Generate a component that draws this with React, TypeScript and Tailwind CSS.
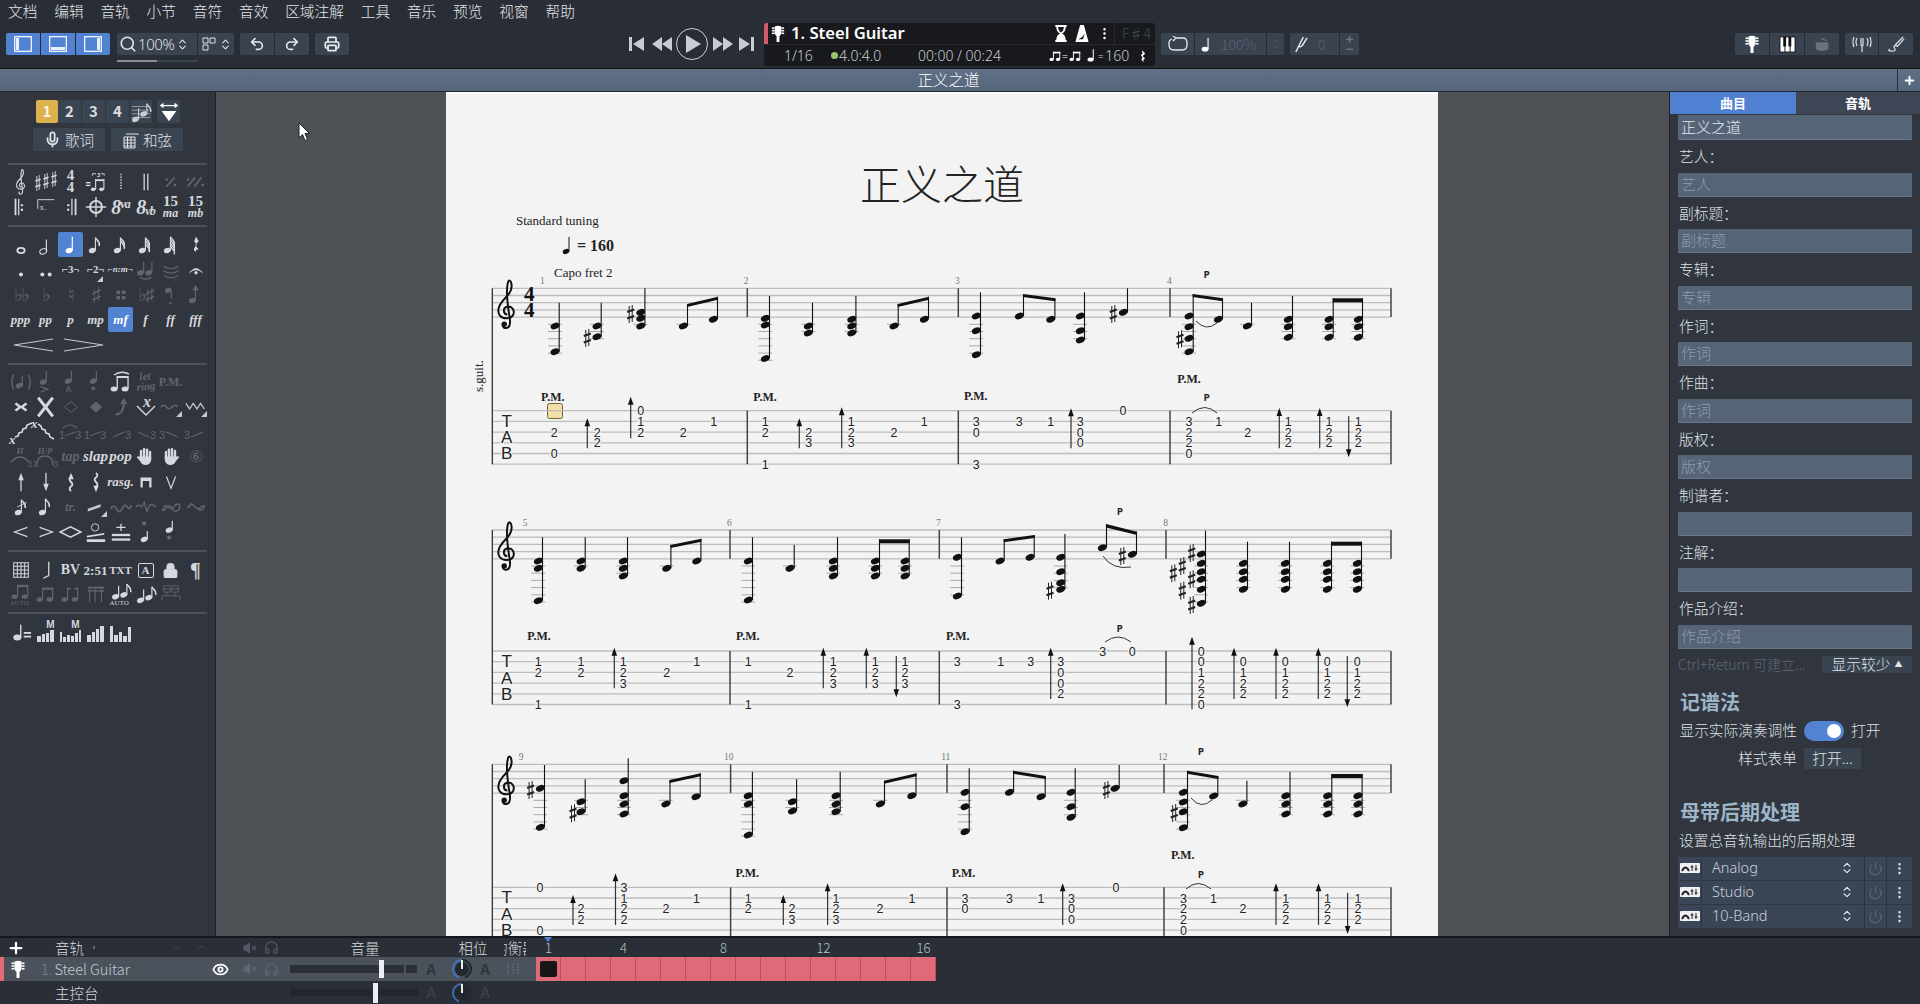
import React from 'react';
import { Undo2, Redo2, Printer, Search, Eye, Power, ChevronsUpDown, EllipsisVertical, Plus, Headphones, VolumeX, Mic, Lock, ChevronDown, ChevronUp } from 'lucide-react';

const SERIF = "font-['Liberation_Serif',serif]";
const clefD = 'M1.5 5C-3 5-4-2 1-3.5C7-5 10 1 8 5.5C6 10-3 11-7 6C-11 0-6-8 0-14C5-19 7-24 6-29C5.5-33 3-34 2-30C.5-24 1-10 4 8C5 14 5 19 1 20C-3 21-5 17-2 15';

type Chord = [number, number, number[]];
type Sys = {
  T: number; S: number; bars: number[]; nums: [number, string][]; chords: Chord[]; beams: [number, number, number, number, number][];
  sharps: [number, number][]; tab: [number, string][]; arrows: [number, number, number][]; pms: [number, number][]; ps: [number, number][]; slurs: string[];
};
const A = [326, 333];
const systems: Sys[] = [
  {
    T: 288.3, S: 410.7, bars: [747.3, 958.3, 1170, 1391], nums: [[542.3, '1'], [746, '2'], [957.3, '3'], [1169.3, '4']],
    chords: [
      [555, 302.7, [326, 351.7]], [597, 302.7, [326, 336.7]], [640.7, 288.3, [312.3, 318.3, 326]], [683.3, 304, [326]], [713.3, 296.7, [319.3]],
      [765.3, 296, [318.3, 325, 358.5]], [808.3, 302.7, A], [851.7, 296, [319.3, 326, 333]], [894, 304, [326]], [924.3, 296.7, [319.3]],
      [976.3, 292.3, [316, 330.7, 354.7]], [1019.3, 294, [316]], [1050.7, 298.3, [319.3]], [1080.3, 292.3, [316, 330.7, 340]], [1123.3, 288.3, [312.3]],
      [1189, 294, [316, 326.7, 338.3, 351.7]], [1218.3, 298.3, [319.3]], [1247.3, 302.7, [326]], [1288.3, 296, [319.3, 326.7, 337.3]], [1329, 298.3, [319.3, 326.7, 337.3]], [1358.3, 298.3, [319.3, 326.7, 337.3]],
    ],
    beams: [[683.3, 304, 713.3, 296.7, 3], [894, 304, 924.3, 296.7, 3], [1019.3, 294, 1050.7, 298.3, 3], [1189, 294, 1218.3, 298.3, 3], [1329, 298.3, 1358.3, 298.3, 4]],
    sharps: [[587.3, 338], [630.7, 314], [1113.3, 314], [1180, 339.3]],
    tab: [[554.3, '..2.0.'], [597.3, '..22..'], [640.7, '012...'], [683.3, '..2...'], [713.7, '.1....'], [765.3, '.12..1'], [808.7, '..23..'], [851.3, '.123..'], [894, '..2...'], [924.3, '.1....'],
      [976.3, '.30..3'], [1019.3, '.3....'], [1050.7, '.1....'], [1080.3, '.300..'], [1123, '0.....'], [1189, '.3220.'], [1218.7, '.1....'], [1247.7, '..2...'], [1288.3, '.122..'], [1329, '.122..'], [1358.3, '.122..']],
    arrows: [[587.3, 448.3, 418.3], [630.7, 438.3, 396.7], [799.3, 448.3, 418.3], [841.7, 448.3, 407.3], [1071, 448.3, 408.3], [1279.3, 448.3, 408], [1319.7, 448.3, 408], [1348.7, 416, 457.3]],
    pms: [[541, 397], [753.3, 397], [964, 396], [1177.3, 379]], ps: [[1206.7, 274.3], [1206.7, 397]],
    slurs: ['M1196 321Q1206 332 1217 323', 'M1192 413Q1205 402 1217 413'],
  },
  {
    T: 530, S: 651, bars: [730, 939.3, 1166, 1391], nums: [[525, '5'], [729.3, '6'], [938.3, '7'], [1165.7, '8']],
    chords: [
      [538.3, 537.3, [561, 568.3, 600.7]], [581, 537.3, [561, 568.3]], [623.3, 537.3, [561, 568.3, 576]], [666.7, 545, [568.3]], [696.7, 538.7, [561]],
      [748.3, 537.3, [561, 600]], [790, 545, [568.3]], [833.3, 537.3, [561, 568.3, 576]], [875.3, 539.3, [561, 568.3, 576]], [905, 539.3, [561, 568.3, 576]],
      [957.3, 537.3, [557.3, 596]], [1000, 539.3, [561]], [1030, 535, [557.3]], [1060.7, 534, [557.3, 571.7, 582.7, 589.3]], [1102.3, 524, [547.7]], [1132.3, 531.7, [554.3]],
      [1201.3, 530.7, [554, 563.3, 571.7, 579.3, 589.3, 603.3]], [1243.3, 541.7, [563.3, 571.7, 579.3, 589.3]], [1285.3, 541.7, [563.3, 571.7, 579.3, 589.3]], [1327.3, 541.7, [563.3, 571.7, 579.3, 589.3]], [1357.3, 541.7, [563.3, 571.7, 579.3, 589.3]],
    ],
    beams: [[666.7, 545, 696.7, 538.7, 3], [875.3, 539.3, 905, 539.3, 4], [1000, 539.3, 1030, 535, 3], [1102.3, 524, 1132.3, 531.7, 3.4], [1327.3, 541.7, 1357.3, 541.7, 4]],
    sharps: [[1050, 590.7], [1122.3, 556], [1191.7, 553], [1182.3, 566], [1173.3, 573.3], [1191.7, 579.3], [1182.3, 590.7], [1191.7, 605]],
    tab: [[538.3, '.12..1'], [581, '.12...'], [623.3, '.123..'], [666.7, '..2...'], [696.7, '.1....'], [748.3, '.1...1'], [790, '..2...'], [833.3, '.123..'], [875.3, '.123..'], [905, '.123..'],
      [957.3, '.3...3'], [1000.7, '.1....'], [1030.7, '.3....'], [1060.7, '.3002.'], [1102.7, '3.....'], [1132.3, '0.....'], [1201.3, '001220'], [1243.3, '.0122.'], [1285.3, '.0122.'], [1327.3, '.0122.'], [1357.3, '.0122.']],
    arrows: [[614.3, 688.3, 647.7], [823.3, 688.3, 647.7], [866.3, 688.3, 647.7], [896.3, 656, 697.3], [1050.7, 699, 647.7], [1192, 709.3, 636.7], [1234, 699, 647.7], [1276, 699, 647.7], [1318.3, 699, 647.7], [1347.3, 656, 707.3]],
    pms: [[527.3, 636], [736, 636], [946, 636]], ps: [[1120, 511.7], [1119.7, 628]],
    slurs: ['M1103 556Q1112 570 1131 567', 'M1105 642Q1118 632 1131 642'],
  },
  {
    T: 764.3, S: 887.3, bars: [730.6, 947, 1164, 1391], nums: [[521, '9'], [728.8, '10'], [945.8, '11'], [1162.7, '12']],
    chords: [
      [540.3, 765, [788.3, 827.3]], [581, 779.3, [801.7, 811.7]], [624, 758.3, [780.7, 795.7, 804, 814]], [665.8, 780, [804]], [696, 773.3, [796.7]],
      [748.2, 771.7, [795.7, 804, 835]], [792.4, 779.3, [801.7, 811]], [836, 771.7, [795.7, 804, 811.7]], [880.3, 780.7, [804]], [911.8, 773.3, [795.7]],
      [965, 768.3, [792.3, 806.7, 831.7]], [1009.4, 770.7, [792.3]], [1041, 776, [796.7]], [1071, 768.3, [792.3, 806.7, 817.3]], [1115, 765, [788.3]],
      [1183.3, 770.7, [792.3, 802, 811.7, 827.7]], [1213.6, 776, [796]], [1242.7, 780.7, [804]], [1285.8, 771.7, [795.7, 804, 814]], [1327.6, 774, [795.7, 804, 814]], [1357.9, 774, [795.7, 804, 814]],
    ],
    beams: [[665.8, 780, 696, 773.3, 3], [880.3, 780.7, 911.8, 773.3, 3], [1009.4, 770.7, 1041, 776, 3], [1183.3, 770.7, 1213.6, 776, 3], [1327.6, 774, 1357.9, 774, 4]],
    sharps: [[530.6, 790], [573, 813.3], [1106.4, 790], [1174.2, 813]],
    tab: [[540, '0...0.'], [581, '..22..'], [624, '3122..'], [666, '..2...'], [696.5, '.1....'], [748.2, '.12...'], [792, '..23..'], [836, '.123..'], [880, '..2...'], [912, '.1....'],
      [965, '.30...'], [1009.5, '.3....'], [1041, '.1....'], [1071.5, '.300..'], [1116, '0.....'], [1183.5, '.3220.'], [1213.6, '.1....'], [1243, '..2...'], [1285.8, '.122..'], [1327.6, '.122..'], [1358, '.122..']],
    arrows: [[573, 925, 895], [615.5, 925, 873.3], [783.3, 925, 895], [827.6, 925, 883.3], [1062.7, 925, 883.3], [1276, 925, 883.3], [1318.5, 925, 883.3], [1347.6, 892.7, 934]],
    pms: [[735.5, 872.7], [951.8, 872.7], [1171, 855]], ps: [[1201, 751.3], [1201, 874]],
    slurs: ['M1191 798Q1201 810 1212 800', 'M1186 889Q1198 878 1211 889'],
  },
];

const Sharp = ({ x, y }: { x: number; y: number }) => (
  <g stroke="#222" fill="none">
    <path d={`M${x - 1.5} ${y - 8}V${y + 9}M${x + 1.5} ${y - 9}V${y + 8}`} strokeWidth="1" />
    <path d={`M${x - 3.5} ${y - 2}L${x + 3.5} ${y - 4.5}M${x - 3.5} ${y + 4.5}L${x + 3.5} ${y + 2}`} strokeWidth="2" />
  </g>
);

const Head = ({ x, y }: { x: number; y: number }) => <ellipse cx={x} cy={y} rx="4.6" ry="3.1" transform={`rotate(-22 ${x} ${y})`} fill="#111" />;

function System({ s, first }: { s: Sys; first: boolean }) {
  const bottom = s.T + 28.8;
  return (
    <g>
      {[0, 1, 2, 3, 4].map((i) => <line key={i} x1="492.3" x2="1391" y1={s.T + i * 7.2} y2={s.T + i * 7.2} stroke="#bdbdbd" strokeWidth="1.3" />)}
      {[0, 1, 2, 3, 4, 5].map((i) => <line key={i} x1="492.3" x2="1391" y1={s.S + i * 10.7} y2={s.S + i * 10.7} stroke="#bdbdbd" strokeWidth="1.3" />)}
      <line x1="492.3" x2="492.3" y1={s.T} y2={s.S + 53.5} stroke="#222" strokeWidth="1.2" />
      {s.bars.map((b) => (
        <g key={b} stroke="#444" strokeWidth="1.5">
          <line x1={b} x2={b} y1={s.T} y2={bottom} />
          <line x1={b} x2={b} y1={s.S} y2={s.S + 53.5} />
        </g>
      ))}
      <g transform={`translate(506,${s.T + 21.6}) scale(.9)`}>
        <path d={clefD} fill="none" stroke="#111" strokeWidth="2.2" />
        <circle cx="-2" cy="16" r="3" fill="#111" />
      </g>
      {first && <g fill="#111" fontFamily="Liberation Serif, serif" fontWeight="700" fontSize="21" textAnchor="middle"><text x="529.3" y="301">4</text><text x="529.3" y="317">4</text></g>}
      {s.nums.map(([x, n]) => <text key={x} x={x} y={s.T - 4} fontFamily="Liberation Serif, serif" fontSize="9.5" fill="#777" textAnchor="middle">{n}</text>)}
      {s.chords.map(([x, top, ys], i) => {
        const max = Math.max(...ys);
        const ledgers: number[] = [];
        for (let k = 1; bottom + 7.2 * k <= max + 3; k++) ledgers.push(bottom + 7.2 * k);
        return (
          <g key={i}>
            {ledgers.map((l) => <line key={l} x1={x - 7} x2={x + 7} y1={l} y2={l} stroke="#aaa" strokeWidth="1" />)}
            {ys.map((y) => <Head key={y} x={x} y={y} />)}
            <line x1={x + 4.2} x2={x + 4.2} y1={top} y2={max} stroke="#111" strokeWidth="1.1" />
          </g>
        );
      })}
      {s.beams.map(([a, b, c, d, t], i) => <polygon key={i} points={`${a + 3.7},${b} ${c + 4.7},${d} ${c + 4.7},${d + t} ${a + 3.7},${b + t}`} fill="#111" />)}
      {s.sharps.map(([x, y], i) => <Sharp key={i} x={x} y={y} />)}
      {s.slurs.map((d) => <path key={d} d={d} fill="none" stroke="#333" strokeWidth="1" />)}
      {s.tab.map(([x, t]) => t.split('').map((c, i) => c === '.' ? null : (
        <text key={x + '-' + i} x={x} y={s.S + i * 10.7 + 4.6} textAnchor="middle" fontFamily="Liberation Sans, sans-serif" fontSize="12.5" fill="#222" stroke="#f3f3f3" strokeWidth="2.4" paintOrder="stroke">{c}</text>
      )))}
      {s.arrows.map(([x, y1, y2], i) => {
        const dir = y2 < y1 ? 1 : -1;
        return (
          <g key={i}>
            <line x1={x} x2={x} y1={y1} y2={y2 + dir * 6} stroke="#333" strokeWidth="1.2" />
            <polygon points={`${x},${y2} ${x - 2.8},${y2 + dir * 8} ${x + 2.8},${y2 + dir * 8}`} fill="#111" />
          </g>
        );
      })}
      {s.pms.map(([x, y]) => <text key={x} x={x} y={y + 4} fontFamily="Liberation Serif, serif" fontWeight="700" fontSize="12" fill="#222">P.M.</text>)}
      {s.ps.map(([x, y]) => <text key={y} x={x} y={y + 3.5} textAnchor="middle" fontFamily="Liberation Mono, monospace" fontWeight="700" fontSize="10" fill="#222">P</text>)}
      <g fontFamily="Liberation Sans, sans-serif" fontSize="17" fill="#222" textAnchor="middle" stroke="#f3f3f3" strokeWidth="2" paintOrder="stroke">
        <text x="506.7" y={s.S + 16}>T</text>
        <text x="506.7" y={s.S + 32.5}>A</text>
        <text x="506.7" y={s.S + 48.5}>B</text>
      </g>
    </g>
  );
}

function Score() {
  return (
    <svg viewBox="446 92 992 844" width="992" height="844" className="block">
      <rect x="446" y="92" width="992" height="844" fill="#f3f3f3" />
      <rect x="446" y="92" width="992" height="2" fill="#ffffff" />
      <text x="942" y="200" textAnchor="middle" fontFamily="Noto Sans CJK SC, sans-serif" fontWeight="300" fontSize="41" fill="#222">正义之道</text>
      <text x="516" y="225" fontFamily="Liberation Serif, serif" fontSize="13" fill="#222">Standard tuning</text>
      <ellipse cx="566" cy="251.5" rx="3.4" ry="2.4" transform="rotate(-22 566 251.5)" fill="#111" />
      <line x1="569" x2="569" y1="251" y2="237" stroke="#111" strokeWidth="1" />
      <text x="577" y="251" fontFamily="Liberation Serif, serif" fontWeight="700" fontSize="16" fill="#222">= 160</text>
      <text x="554" y="277" fontFamily="Liberation Serif, serif" fontSize="13" fill="#222">Capo fret 2</text>
      <text transform="translate(483,392) rotate(-90)" fontFamily="Liberation Serif, serif" fontSize="13" fill="#222">s.guit.</text>
      <rect x="547.5" y="403.5" width="15" height="15" rx="2" fill="#f2dfa6" stroke="#6d6238" strokeWidth="1" />
      {systems.map((s, i) => <System key={i} s={s} first={i === 0} />)}
    </svg>
  );
}

/* ---------- small drawings ---------- */
const GuitarHead = ({ c = 'w-[14px] h-[18px]' }: { c?: string }) => (
  <svg viewBox="0 0 14 18" className={c} fill="currentColor">
    <path d="M3.5 1.5Q7 0 10.5 1.5L10.5 8Q10 11 8.5 12V18H5.5V12Q4 11 3.5 8Z" />
    <rect x="0.5" y="2.5" width="3" height="1.6" /><rect x="0.5" y="5.2" width="3" height="1.6" /><rect x="0.5" y="8" width="3" height="1.6" />
    <rect x="10.5" y="2.5" width="3" height="1.6" /><rect x="10.5" y="5.2" width="3" height="1.6" /><rect x="10.5" y="8" width="3" height="1.6" />
  </svg>
);
const S = ({ children, w = 22, h = 22 }: { children: React.ReactNode; w?: number; h?: number }) => (
  <svg viewBox="0 0 24 24" width={w} height={h} fill="currentColor" stroke="none">{children}</svg>
);
const Ln = ({ d, w = 1.4 }: { d: string; w?: number }) => <path d={d} fill="none" stroke="currentColor" strokeWidth={w} />;
const N = ({ x = 9, y = 18, top = 4, f = 0, hollow = false }: { x?: number; y?: number; top?: number; f?: number; hollow?: boolean }) => (
  <g>
    <ellipse cx={x} cy={y} rx="3.9" ry="2.8" transform={`rotate(-22 ${x} ${y})`} fill={hollow ? 'none' : 'currentColor'} stroke={hollow ? 'currentColor' : 'none'} strokeWidth="1.2" />
    <line x1={x + 3.4} x2={x + 3.4} y1={y} y2={top} stroke="currentColor" strokeWidth="1.3" />
    {Array.from({ length: f }).map((_, i) => <path key={i} d={`M${x + 3.4} ${top + i * 3.4}C${x + 4.5} ${top + 3 + i * 3.4} ${x + 9} ${top + 4 + i * 3.4} ${x + 7.5} ${top + 9 + i * 3.4}`} fill="none" stroke="currentColor" strokeWidth="1.6" />)}
  </g>
);
const Beam2 = ({ auto = false }: { auto?: boolean }) => (
  <S><g transform={auto ? 'translate(0,-3)' : ''}>
    <ellipse cx="5" cy="18" rx="3.3" ry="2.4" /><ellipse cx="16" cy="18" rx="3.3" ry="2.4" />
    <rect x="7.6" y="5" width="1.3" height="13" /><rect x="18.6" y="5" width="1.3" height="13" /><rect x="7.6" y="5" width="12.3" height="2.4" />
  </g></S>
);
const Sym = ({ c, children }: { c: string; children: React.ReactNode }) => <span className={`${SERIF} ${c} whitespace-nowrap leading-none`}>{children}</span>;
const Acc = ({ children }: { children: React.ReactNode }) => <span className="font-['DejaVu_Sans',sans-serif] text-[19px] leading-none tracking-[-2px]">{children}</span>;
const HandIcon = ({ flip = false }: { flip?: boolean }) => (
  <svg viewBox="0 0 20 20" width="19" height="19" fill="currentColor" className={flip ? '-scale-x-100' : ''}>
    <rect x="4" y="3" width="2.6" height="10" rx="1.3" /><rect x="7.2" y="1" width="2.6" height="12" rx="1.3" /><rect x="10.4" y="1.5" width="2.6" height="11" rx="1.3" /><rect x="13.6" y="4" width="2.4" height="9" rx="1.2" />
    <path d="M4 10H16V14Q15 19 10 19Q6 19 4.5 15L1 11Q1 9 3 10Z" />
  </svg>
);
const Corner = () => <svg viewBox="0 0 6 6" className="absolute right-[1px] bottom-[2px] w-[6px] h-[6px]" fill="#c6c9ce"><polygon points="6,0 6,6 0,6" /></svg>;
const Slide = ({ d, l, r }: { d: string; l?: string; r?: string }) => (
  <svg width="25" height="22" viewBox="0 0 25 22" fill="currentColor"><path d={d} fill="none" stroke="currentColor" strokeWidth="1.2" />
    {l && <text x="1" y="18" fontFamily="Liberation Sans, sans-serif" fontSize="11">{l}</text>}
    {r && <text x="17" y="18" fontFamily="Liberation Sans, sans-serif" fontSize="11">{r}</text>}
  </svg>
);
const Bars = ({ ns, m }: { ns: number[]; m?: boolean }) => (
  <div className="relative flex items-end gap-[1px] h-[20px] w-[22px] justify-center">
    {m && <span className="absolute -top-[2px] right-[2px] text-[10px] font-bold leading-none font-['Liberation_Sans',sans-serif]">M</span>}
    {ns.map((n, i) => <div key={i} className="w-[3.4px] bg-current" style={{ height: n }} />)}
  </div>
);

type It = { n?: React.ReactNode; d?: boolean; sel?: boolean; span?: boolean };
const it = (n: React.ReactNode, d = false, sel = false): It => ({ n, d, sel });
const dyn = (t: string, sel = false) => it(<Sym c="font-bold italic text-[13px]">{t}</Sym>, false, sel);
const Sh = ({ x, y }: { x: number; y: number }) => <g><path d={`M${x - 1.2} ${y - 7}V${y + 8}M${x + 1.2} ${y - 8}V${y + 7}`} stroke="currentColor" fill="none" strokeWidth=".9" /><path d={`M${x - 2.6} ${y - 2}L${x + 2.6} ${y - 3.8}M${x - 2.6} ${y + 3.8}L${x + 2.6} ${y + 2}`} stroke="currentColor" fill="none" strokeWidth="1.6" /></g>;

const palette1: It[] = [
  it(<svg viewBox="-12 -36 24 60" width="15" height="28"><path d={clefD} fill="none" stroke="currentColor" strokeWidth="2.4" /></svg>),
  it(<svg viewBox="0 0 24 24" width="24" height="24"><Sh x={4} y={13} /><Sh x={12} y={11} /><Sh x={20} y={9} /></svg>),
  it(<Sym c="font-bold text-[15px] flex flex-col items-center -space-y-[3px]"><span>4</span><span>4</span></Sym>),
  it(<S><rect x="1" y="12" width="5" height="1.5" /><rect x="1" y="15" width="5" height="1.5" /><ellipse cx="9" cy="20" rx="2.6" ry="2" /><ellipse cx="18" cy="20" rx="2.6" ry="2" /><rect x="11" y="9" width="1.2" height="11" /><rect x="20" y="9" width="1.2" height="11" /><rect x="11" y="9" width="10" height="2" /><path d="M8 5V3H12M17 3H21V5" fill="none" stroke="currentColor" /><text x="13" y="6" fontSize="6" fontWeight="700">3</text></S>),
  it(<S><line x1="12" x2="12" y1="3" y2="21" stroke="currentColor" strokeWidth="1.5" strokeDasharray="1.5 1.5" /></S>),
  it(<S><Ln d="M10 3V21M14 3V21" /></S>),
  it(<S><Ln d="M7 17L16 7" w={2} /><rect x="6" y="8" width="2.6" height="2.6" /><rect x="15" y="14" width="2.6" height="2.6" /></S>, true),
  it(<S><Ln d="M3 17L11 7M10 17L18 7" w={2} /><rect x="2" y="8" width="2.6" height="2.6" /><rect x="18" y="14" width="2.6" height="2.6" /></S>, true),
  it(<S><rect x="5" y="3" width="2" height="18" /><Ln d="M9.5 3V21" /><circle cx="13" cy="10" r="1.3" /><circle cx="13" cy="15" r="1.3" /></S>),
  it(<S><Ln d="M3 14V4H21" w={1} /><text x="5" y="15" fontSize="10" fontFamily="Liberation Serif, serif">x.</text></S>),
  it(<S><circle cx="9" cy="10" r="1.3" /><circle cx="9" cy="15" r="1.3" /><Ln d="M13 3V21" /><rect x="16" y="3" width="2" height="18" /></S>),
  it(<S><circle cx="12" cy="12" r="6.5" fill="none" stroke="currentColor" strokeWidth="2.2" /><Ln d="M12 1V23M1 12H23" w={1.5} /></S>),
  it(<Sym c="italic font-bold text-[20px] tracking-[-1px]">8<span className="text-[12px] align-[6px]">va</span></Sym>),
  it(<Sym c="italic font-bold text-[20px] tracking-[-1px]">8<span className="text-[12px] align-[-1px]">vb</span></Sym>),
  it(<Sym c="font-bold flex flex-col items-center text-[15px] -space-y-[2px]"><span>15</span><span className="italic text-[12px]">ma</span></Sym>),
  it(<Sym c="font-bold flex flex-col items-center text-[15px] -space-y-[2px]"><span>15</span><span className="italic text-[12px]">mb</span></Sym>),
];
const palette2: It[] = [
  it(<S><ellipse cx="12" cy="18" rx="4" ry="2.8" fill="none" stroke="currentColor" strokeWidth="2" /></S>),
  it(<S><N x={9} y={19} top={6} hollow /></S>),
  it(<S><N x={10} y={18} top={3} /></S>, false, true),
  it(<S><N x={8} y={18} top={4} f={1} /></S>),
  it(<S><N x={8} y={18} top={4} f={2} /></S>),
  it(<S><N x={8} y={18} top={4} f={3} /></S>),
  it(<S><N x={8} y={18} top={3} f={4} /></S>),
  it(<S><path d="M12 3L15 8L11 12L15 17Q11 16 12 20Q8 17 11 14L13 12L10 8Z" /></S>),
  it(<S><circle cx="12" cy="17" r="2.2" /></S>),
  it(<S><circle cx="8" cy="17" r="2.2" /><circle cx="16" cy="17" r="2.2" /></S>),
  it(<Sym c="font-bold text-[11px] tracking-tight">⌐3¬</Sym>),
  it(<div className="relative w-full h-full flex items-center justify-center"><Sym c="font-bold text-[11px] tracking-tight">⌐2¬</Sym><span className="absolute right-[5px] bottom-0 border-l-[6px] border-l-transparent border-b-[6px] border-b-[#c6c9ce]" /></div>),
  it(<Sym c="font-bold italic text-[9px]">⌐n:m¬</Sym>),
  it(<S><N x={6} y={15} top={3} /><N x={15} y={15} top={3} /><Ln d="M5 20Q11 24 18 20" /></S>, true),
  it(<S><Ln d="M4 8Q12 13 20 8M4 13Q12 18 20 13M4 18Q12 23 20 18" /></S>, true),
  it(<S><path d="M4 16Q12 4 20 16Q12 8 4 16Z" /><circle cx="12" cy="15" r="1.8" /></S>),
  it(<Acc>♭♭</Acc>, true),
  it(<Acc>♭</Acc>, true),
  it(<Acc>♮</Acc>, true),
  it(<Acc>♯</Acc>, true),
  it(<S><path d="M7 7H11V11H7ZM13 7H17V11H13ZM7 13H11V17H7ZM13 13H17V17H13Z" /></S>, true),
  it(<Acc>♭♯</Acc>, true),
  it(<S><N x={9} y={7} top={16} /><path d="M9 20L14 20L11.5 23Z" /></S>, true),
  it(<S><N x={8} y={18} top={5} /><path d="M11.5 1L15 7H8Z" /></S>, true),
  dyn('ppp'), dyn('pp'), dyn('p'), dyn('mp'), dyn('mf', true), dyn('f'), dyn('ff'), dyn('fff'),
];
const palette3: It[] = [
  it(<S><Ln d="M4 4Q0 12 4 20M20 4Q24 12 20 20" w={1.6} /><N x={10} y={16} top={5} /></S>, true),
  it(<S><N x={9} y={12} top={0} /><Ln d="M6 17L14 20L6 23" /></S>, true),
  it(<S><N x={9} y={11} top={0} /><text x="6" y="23" fontSize="9" fontWeight="700" fontFamily="Liberation Sans">A</text></S>, true),
  it(<S><N x={9} y={11} top={0} /><circle cx="9" cy="19" r="2" /></S>, true),
  it(<S w={24} h={24}><Ln d="M5 5Q12 0 20 4" /><rect x="7.6" y="7" width="1.3" height="12" /><rect x="18.4" y="7" width="1.3" height="12" /><rect x="7.6" y="6" width="12" height="2" /><ellipse cx="5" cy="19" rx="3.4" ry="2.5" /><ellipse cx="16" cy="19" rx="3.4" ry="2.5" /></S>),
  it(<Sym c="font-bold italic text-[11px] flex flex-col items-center -rotate-6 -space-y-[1px]"><span>let</span><span>ring</span></Sym>, true),
  it(<Sym c="font-bold text-[12px]">P.M.</Sym>, true),
  it(null),
  it(<S><path d="M7 7L12 11L17 7L19 9L15 12L19 15L17 17L12 13L7 17L5 15L9 12L5 9Z" /></S>),
  it(<S w={26} h={26}><Ln d="M5 3L19 21M19 3L5 21" w={3} /></S>),
  it(<S><path d="M12 6L19 12L12 18L5 12Z" fill="none" stroke="currentColor" /></S>, true),
  it(<S><path d="M12 6L19 12L12 18L5 12Z" /></S>, true),
  it(<S><Ln d="M6 20Q15 20 15 7" w={2} /><path d="M15 2L19 9H11Z" /></S>, true),
  it(<S w={24} h={24}><Ln d="M3 11L12 20L21 11" /><text x="9" y="12" fontSize="16" fontWeight="700" fontStyle="italic" fontFamily="Liberation Serif">x</text></S>),
  it(<div className="relative w-full h-full flex items-center justify-center"><S><Ln d="M1 12Q4 8 7 12T13 12T19 12" w={1.6} /></S><Corner /></div>, true),
  it(<div className="relative w-full h-full flex items-center justify-center text-[#c6c9ce]"><S><Ln d="M1 8L5 14L9 8L13 14L17 8L21 14" w={1.3} /></S><Corner /></div>),
  it(<svg width="25" height="25" viewBox="0 0 25 25" className="overflow-visible"><Ln d="M7 18L10 17L11 14L14 13L15 10L18 9L19 6L24 4" w={1.6} /><text x="1" y="25" fontSize="13" fontStyle="italic" fontWeight="700" fill="currentColor" fontFamily="Liberation Serif">x</text></svg>),
  it(<svg width="25" height="25" viewBox="0 0 25 25" className="overflow-visible"><Ln d="M5 5L8 7L9 10L12 11L13 14L16 15L17 18L21 20" w={1.6} /><text x="-2" y="9" fontSize="13" fontStyle="italic" fontWeight="700" fill="currentColor" fontFamily="Liberation Serif">x</text></svg>),
  it(<Slide d="M5 7Q12 1 19 7M7 15L17 11" l="1" r="3" />, true),
  it(<Slide d="M7 15L17 11" l="1" r="3" />, true),
  it(<Slide d="M5 16L16 11" r="3" />, true),
  it(<Slide d="M5 11L16 16" r="3" />, true),
  it(<Slide d="M8 11L20 16" l="3" />, true),
  it(<Slide d="M8 16L20 11" l="3" />, true),
  it(<svg width="25" height="24" viewBox="0 0 25 24" fill="currentColor"><text x="12" y="9" textAnchor="middle" fontSize="9" fontStyle="italic" fontWeight="700" fontFamily="Liberation Serif">H</text><Ln d="M3 17Q12 7 21 17" /><text x="19" y="22" fontSize="9" fontFamily="Liberation Sans">3</text></svg>, true),
  it(<svg width="25" height="24" viewBox="0 0 25 24" fill="currentColor"><text x="12" y="9" textAnchor="middle" fontSize="9" fontStyle="italic" fontWeight="700" fontFamily="Liberation Serif">H/P</text><Ln d="M4 20Q4 11 12 11T20 20" /><text x="0" y="22" fontSize="9" fontFamily="Liberation Sans">1</text><text x="20" y="22" fontSize="9" fontFamily="Liberation Sans">3</text></svg>, true),
  it(<Sym c="italic font-bold text-[14px]">tap</Sym>, true),
  it(<Sym c="italic font-bold text-[15px]">slap</Sym>),
  it(<Sym c="italic font-bold text-[15px]">pop</Sym>),
  it(<HandIcon />),
  it(<HandIcon flip />),
  it(<span className="font-['DejaVu_Sans',sans-serif] text-[16px]">⑥</span>, true),
  it(<S><Ln d="M12 22V6" /><path d="M12 2L15 10H9Z" /></S>),
  it(<S><Ln d="M12 2V18" /><path d="M12 22L15 14H9Z" /></S>),
  it(<S><Ln d="M12 22Q9 19 12 17T12 12T12 7" w={2} /><path d="M12 2L15 9H9Z" /></S>),
  it(<S><Ln d="M12 2Q15 5 12 7T12 12T12 17" w={2} /><path d="M12 23L15 16H9Z" /></S>),
  it(<Sym c="italic font-bold text-[13px]">rasg.</Sym>),
  it(<S><path d="M6 7H18V18H15.5V11H8.5V18H6Z" /></S>),
  it(<S><Ln d="M7 6L12 19L17 6" w={1.3} /></S>),
  it(null),
  it(<S><N x={9} y={18} top={4} f={1} /><Ln d="M8 12L18 7" w={1} /></S>),
  it(<S><N x={8} y={18} top={3} f={1} /></S>),
  it(<Sym c="italic font-bold text-[13px]">tr.</Sym>, true),
  it(<div className="relative w-full h-full flex items-center justify-center text-[#c6c9ce]"><S><path d="M3 14L17 9V12L3 17Z" /></S><Corner /></div>),
  it(<S><Ln d="M1 14Q4 8 7 14T13 14T19 12T23 10" w={2} /></S>, true),
  it(<S><Ln d="M1 12Q4 8 7 12L10 7L13 17L16 10Q19 8 23 12" w={1.5} /></S>, true),
  it(<S><Ln d="M3 15Q5 8 9 12T15 12T21 9Q23 14 19 16T13 13T7 13T3 15Z" w={1.6} /></S>, true),
  it(<S><Ln d="M3 13Q6 7 10 11T16 13T21 11Q20 16 16 15T9 10T4 13" w={1.6} /></S>, true),
  it(<S><Ln d="M19 7L5 12L19 17" /></S>),
  it(<S><Ln d="M5 7L19 12L5 17" /></S>),
  it(<S w={26} h={26}><Ln d="M2 12L12 7L22 12L12 17Z" /></S>),
  it(<S><circle cx="11" cy="7" r="4" fill="none" stroke="currentColor" /><path d="M2 16L21 13V15L2 18ZM2 20H22V23H2Z" /></S>),
  it(<S><Ln d="M12 3V11M7 7H17" /><rect x="2" y="14" width="20" height="2.5" /><rect x="2" y="19" width="20" height="2.5" /></S>),
  it(<S><N x={10} y={20} top={11} /><text x="7" y="9" fontSize="11" fontFamily="DejaVu Sans">*</text></S>),
  it(<S><N x={10} y={10} top={0} /><text x="7" y="24" fontSize="11" fontFamily="DejaVu Sans">*</text></S>),
];
const palette4: It[] = [
  it(<S><path d="M4 4H20V20H4ZM4 8H20M4 12H20M4 16H20M8 4V20M12 4V20M16 4V20" fill="none" stroke="currentColor" strokeWidth="1.1" /></S>),
  it(<S><Ln d="M15 3V18L9 21" /></S>),
  it(<Sym c="font-bold text-[14px]">BV</Sym>),
  it(<Sym c="font-bold text-[13px]">2:51</Sym>),
  it(<Sym c="font-bold text-[11px]">TXT</Sym>),
  it(<div className={`${SERIF} w-[16px] h-[15px] border border-current rounded-[2px] flex items-center justify-center text-[11px] font-bold`}>A</div>),
  it(<Lock size={17} fill="currentColor" strokeWidth={1.5} />),
  it(<span className={`${SERIF} font-bold text-[20px] leading-none`}>¶</span>),
  it(<div className="relative"><Beam2 auto /><span className={`${SERIF} absolute -bottom-[3px] left-0 text-[7px]`}>AUTO</span></div>, true),
  it(<Beam2 />, true),
  it(<S><ellipse cx="5" cy="18" rx="3.3" ry="2.4" /><ellipse cx="16" cy="18" rx="3.3" ry="2.4" /><rect x="7.6" y="5" width="1.3" height="13" /><rect x="18.6" y="5" width="1.3" height="13" /><rect x="7.6" y="5" width="4" height="2.2" /><rect x="16" y="5" width="4" height="2.2" /></S>, true),
  it(<S><Ln d="M5 4V21M11 4V21M18 4V21" w={1.2} /><rect x="3" y="4" width="18" height="2" /><rect x="3" y="8" width="18" height="1.5" /></S>, true),
  it(<div className="relative"><S><g transform="translate(0,-3)"><N x={6} y={18} top={6} /><N x={15} y={16} top={4} f={1} /></g></S><span className={`${SERIF} absolute -bottom-[3px] left-0 text-[7px]`}>AUTO</span></div>),
  it(<S><N x={6} y={19} top={7} /><N x={15} y={16} top={4} f={1} /></S>),
  it(<S><path d="M4 3H11V10H4ZM13 3H20V10H13ZM4 6.5H11M13 6.5H20M7.5 10V14M16.5 10V14M2 14H22M2 14V19M22 14V19" fill="none" stroke="currentColor" strokeWidth="1" /></S>, true),
];
const palette5: React.ReactNode[] = [
  <S><ellipse cx="8" cy="18" rx="4.4" ry="3.2" /><rect x="11" y="4" width="1.5" height="14" /><rect x="15" y="12" width="8" height="2" /><rect x="15" y="16" width="8" height="2" /></S>,
  <Bars ns={[6, 8, 9, 12]} m />, <Bars ns={[10, 5, 7, 6, 9, 12]} m />, <Bars ns={[7, 10, 13, 16]} />, <Bars ns={[16, 7, 10, 6, 15]} />,
];

function Grid({ items, c = 'auto-rows-[25px]' }: { items: It[]; c?: string }) {
  return (
    <div className={`grid grid-cols-[repeat(8,25px)] ml-2 ${c}`}>
      {items.map((x, i) => (
        <div key={i} className={`flex items-center justify-center overflow-visible ${x.sel ? 'bg-[#5283d3] text-white rounded-[2px]' : x.d ? 'text-[#5e6570]' : 'text-[#d5d8dd]'}`}>{x.n}</div>
      ))}
    </div>
  );
}

const Sep = ({ c }: { c: string }) => <div className={`h-[2px] mx-2 bg-[#49525e] ${c}`} />;

function LeftPanel() {
  return (
    <div className="w-[216px] shrink-0 bg-[#31353d] border-r border-[#1d2025] pt-2 flex flex-col">
      <div className="flex ml-9 h-[23px] items-stretch text-[15px] font-bold text-[#d9dce0]">
        <div className="w-[22px] bg-[#dcb24f] text-[#fff6dd] rounded-[2px] flex items-center justify-center">1</div>
        <div className="w-[71px] bg-[#3b4451] flex divide-x divide-[#31353d]">
          <span className="flex-1 text-center">2</span><span className="flex-1 text-center">3</span><span className="flex-1 text-center">4</span>
        </div>
        <div className="w-[22px] ml-px bg-[#3b4451] flex items-center justify-center text-[#c8ccd2]"><S><Ln d="M2 6H22M2 10H22M2 14H22M2 18H22" w={.7} /><N x={6} y={20} top={8} /><N x={15} y={14} top={3} f={1} /></S></div>
        <div className="w-[23px] ml-[5px] bg-[#3b4451] flex items-center justify-center text-white"><S><Ln d="M3 5H21" /><path d="M2 5L6 2V8ZM22 5L18 2V8ZM4 11H20L12 22Z" /></S></div>
      </div>
      <div className="flex ml-[33px] mt-[5px] gap-[6px] h-[23px] text-[14.5px] text-[#e2e4e8]">
        <div className="w-[72px] bg-[#3b4451] flex items-center justify-center gap-[4px]"><Mic size={17} strokeWidth={2.5} />歌词</div>
        <div className="w-[72px] bg-[#3b4451] flex items-center justify-center gap-[3px]"><svg viewBox="0 0 18 18" width="18" height="18"><path d="M4 3H16V4M2 6H13V17H2ZM2 9H13M2 12H13M2 15H13M5.5 6V17M9 6V17" fill="none" stroke="currentColor" strokeWidth="1" /></svg>和弦</div>
      </div>
      <Sep c="mt-3" />
      <div className="mt-1"><Grid items={palette1} /></div>
      <Sep c="mt-[6px]" />
      <div className="mt-[5px]"><Grid items={palette2} /></div>
      <div className="flex ml-[13px] h-[25px] items-center gap-[11px] text-[#c6c9ce]">
        <svg width="40" height="14" viewBox="0 0 40 14"><path d="M40 1L1 7L40 13" fill="none" stroke="currentColor" strokeWidth="1.2" /></svg>
        <svg width="40" height="14" viewBox="0 0 40 14"><path d="M0 1L39 7L0 13" fill="none" stroke="currentColor" strokeWidth="1.2" /></svg>
      </div>
      <Sep c="mt-[6px]" />
      <div className="mt-1"><Grid items={palette3} /></div>
      <Sep c="mt-[6px]" />
      <div className="mt-[6px]"><Grid items={palette4} c="auto-rows-[24px]" /></div>
      <Sep c="mt-[6px]" />
      <div className="mt-[5px] ml-2 flex text-[#d5d8dd]">
        {palette5.map((n, i) => <div key={i} className="w-[25px] h-[25px] flex items-center justify-center">{n}</div>)}
      </div>
    </div>
  );
}

const fields: [string, string][] = [
  ['艺人：', '艺人'], ['副标题：', '副标题'], ['专辑：', '专辑'], ['作词：', '作词'], ['作曲：', '作词'], ['版权：', '版权'], ['制谱者：', ''], ['注解：', ''], ['作品介绍：', '作品介绍'],
];
const Field = ({ t, v = false, c = 'h-6' }: { t: string; v?: boolean; c?: string }) => (
  <div className={`${c} bg-[#566478] border-b border-[#6a778a] rounded-[1px] pl-[3px] flex items-center text-[15px] ${v ? 'text-[#e6eaef]' : 'text-[#8f9bab]'}`}>{t}</div>
);
const Fx = ({ t }: { t: string }) => (
  <div className="h-[23px] flex items-center bg-[#3a4555] text-[#c9d2dc] text-[14.5px]">
    <div className="w-[24px] flex justify-center border-r border-[#2d333d] h-full items-center shrink-0">
      <svg viewBox="0 0 20 10" width="20" height="10"><rect width="20" height="10" rx="1" fill="#eef0f3" /><path d="M2 8Q5.5 1 9 8" fill="none" stroke="#222" strokeWidth="2" /><path d="M12 2V8M16 2V8M10.5 4H13.5M14.5 6H17.5" stroke="#222" strokeWidth="1" /></svg>
    </div>
    <span className="ml-[10px] w-[128px] font-['Noto_Sans',sans-serif]">{t}</span>
    <ChevronsUpDown size={14} className="text-[#dfe3e8]" />
    <div className="ml-[10px] w-[23px] h-full border-x border-[#2d333d] flex items-center justify-center"><Power size={15} className="text-[#56657a]" /></div>
    <div className="flex-1 flex justify-center"><EllipsisVertical size={15} className="text-[#dfe3e8]" /></div>
  </div>
);
function RightPanel() {
  return (
    <div className="w-[251px] shrink-0 bg-[#31353d] border-l border-[#1d2025] text-[14.7px] text-[#dfe3e8] flex flex-col">
      <div className="flex h-[22px] text-[13px] font-bold text-white">
        <div className="w-[126px] bg-[#4f80d2] flex items-center justify-center">曲目</div>
        <div className="flex-1 bg-[#3e4655] flex items-center justify-center">音轨</div>
      </div>
      <div className="px-2 mt-px"><Field t="正义之道" v c="h-[25px]" /></div>
      <div className="px-2">
        {fields.map(([l, p]) => (
          <div key={l}>
            <div className="h-[32.5px] flex items-center pl-px">{l}</div>
            <Field t={p} />
          </div>
        ))}
      </div>
      <div className="mx-2 mt-[7px] h-[17px] flex items-center justify-between">
        <span className="text-[#5d6878] whitespace-nowrap text-[14px]">Ctrl+Return 可建立...</span>
        <div className="w-[90px] h-[17px] bg-[#3a4350] flex items-center justify-center gap-1 whitespace-nowrap">显示较少<span className="text-[8px]">▲</span></div>
      </div>
      <div className="mx-[10px] mt-[15px] h-7 flex items-center text-[20px] font-bold text-[#9db5c9]">记谱法</div>
      <div className="ml-2 mt-[5px] h-5 flex items-center">
        <div className="w-[119px] text-right whitespace-nowrap">显示实际演奏调性</div>
        <div className="ml-[7px] w-10 h-5 rounded-full bg-[#5283d3] flex items-center justify-end pr-[3px]"><div className="w-[14px] h-[14px] rounded-full bg-white" /></div>
        <span className="ml-[7px]">打开</span>
      </div>
      <div className="ml-2 mt-[7px] h-[21px] flex items-center">
        <div className="w-[119px] text-right">样式表单</div>
        <div className="ml-[7px] w-[57px] h-[21px] bg-[#3a4350] flex items-center justify-center">打开...</div>
      </div>
      <div className="mx-[10px] mt-[29px] h-[29px] flex items-center text-[20px] font-bold text-[#9db5c9]">母带后期处理</div>
      <div className="ml-2 pl-px mt-1 h-5 flex items-center whitespace-nowrap">设置总音轨输出的后期处理</div>
      <div className="mx-2 mt-[6px] flex flex-col gap-px">
        <Fx t="Analog" /><Fx t="Studio" /><Fx t="10-Band" />
      </div>
    </div>
  );
}

const Knob = ({ dim = false }: { dim?: boolean }) => (
  <svg viewBox="0 0 20 20" width="20" height="20">
    <path d="M7 18.5A9 9 0 0 1 10 1" fill="none" stroke={dim ? '#3a6aa8' : '#3f74bd'} strokeWidth="2" />
    <path d="M10 1A9 9 0 0 1 13 18.5" fill="none" stroke="#23272e" strokeWidth="2" />
    <circle cx="10" cy="10" r="7" fill="#23272e" />
    <line x1="10" y1="10" x2="10" y2="1" stroke="#fff" strokeWidth="1.8" />
  </svg>
);
const Cell = ({ w, c = '', children }: { w: string; c?: string; children?: React.ReactNode }) => <div className={`${w} shrink-0 flex items-center justify-center h-full ${c}`}>{children}</div>;
const cellsIdx = Array.from({ length: 16 }, (_, i) => i);

function Bottom() {
  return (
    <div className="h-[68px] shrink-0 bg-[#2a2e36] border-t-2 border-[#15171b] text-[14.5px] text-[#d5d8dd] flex flex-col">
      <div className="h-[19px] flex items-center">
        <Cell w="w-8" c="text-white"><Plus size={18} strokeWidth={3} /></Cell>
        <div className="w-[176px] shrink-0 pl-[23px] flex items-center gap-2 whitespace-nowrap">音轨<EllipsisVertical size={13} />
          <div className="ml-[66px] flex gap-3 text-[#3b404a]"><ChevronDown size={13} /><ChevronUp size={13} /></div></div>
        <Cell w="w-8" />
        <Cell w="w-5" c="text-[#525965]"><VolumeX size={14} fill="currentColor" /></Cell>
        <Cell w="w-[22px]" c="text-[#525965]"><Headphones size={15} /></Cell>
        <Cell w="w-[130px]" c="ml-[18px]">音量</Cell>
        <Cell w="w-[54px]" c="ml-[16px] whitespace-nowrap">相位</Cell>
        <div className="w-[22px] ml-[4px] shrink-0 overflow-hidden flex justify-center whitespace-nowrap"><span className="shrink-0">均衡器</span></div>
        <div className="w-[10px] shrink-0" />
        <div className="relative flex text-[#b5c7c0] text-[13px]">
          <span className="absolute -top-[1px] left-[8px] border-x-[4px] border-x-transparent border-t-[5px] border-t-[#5283d3]" />
          {cellsIdx.map((i) => <div key={i} className="w-[25px] shrink-0 text-center">{[0, 3, 7, 11, 15].includes(i) ? i + 1 : ''}</div>)}
        </div>
      </div>
      <div className="h-6 flex items-center">
        <div className="w-[536px] shrink-0 flex items-center h-full bg-[#4b525c]">
          <div className="w-1 h-full bg-[#e06a78]" />
          <Cell w="w-7" c="text-white"><GuitarHead /></Cell>
          <div className="w-[176px] shrink-0 pl-[9px] text-[14.5px] text-[#c4cad2] whitespace-nowrap"><span className="text-[#7c8490] mr-[2px]">1.</span>Steel Guitar</div>
          <Cell w="w-6" c="text-white"><Eye size={17} strokeWidth={2.5} /></Cell>
          <Cell w="w-2" />
          <Cell w="w-5" c="text-[#5f6772]"><VolumeX size={14} fill="currentColor" /></Cell>
          <Cell w="w-[22px]" c="text-[#5f6772]"><Headphones size={15} /></Cell>
          <div className="w-[128px] ml-2 shrink-0 relative h-full flex items-center">
            <div className="w-[114px] h-[8px] bg-[#2b2f36]" /><div className="w-[11px] ml-[2px] h-[8px] bg-[#2b2f36]" />
            <div className="absolute left-[89px] top-[3px] w-[5px] h-[18px] bg-[#eceff2]" />
          </div>
          <Cell w="w-[26px]" c="font-bold text-[#31353d] text-[15px]">A</Cell>
          <Cell w="w-[20px]" c="ml-[8px]"><Knob /></Cell>
          <Cell w="w-[26px]" c="font-bold text-[#31353d] text-[15px]">A</Cell>
          <Cell w="w-[30px]" c="text-[#5f6772]"><Ln2 /></Cell>
          <div className="w-[2px]" />
        </div>
        <div className="flex h-full">
          {cellsIdx.map((i) => (
            <div key={i} className="w-[25px] h-full bg-[#e06a78] border-r border-[#c04d5c] flex items-center justify-center">
              {i === 0 && <div className="w-[17px] h-[16px] rounded-[2px] bg-[#171717]" />}
            </div>
          ))}
        </div>
      </div>
      <div className="flex-1 flex items-center">
        <div className="w-[32px] shrink-0" />
        <div className="w-[176px] shrink-0 pl-[23px] whitespace-nowrap">主控台</div>
        <div className="w-[82px] shrink-0" />
        <div className="w-[128px] shrink-0 relative h-full flex items-center">
          <div className="w-full h-[7px] bg-[#23272d]" />
          <div className="absolute left-[83px] top-[2px] w-[5px] h-[20px] bg-[#eceff2]" />
        </div>
        <Cell w="w-[26px]" c="font-bold text-[#3a3f47] text-[15px]">A</Cell>
        <Cell w="w-[20px]" c="ml-[8px]"><Knob dim /></Cell>
        <Cell w="w-[26px]" c="font-bold text-[#3a3f47] text-[15px]">A</Cell>
      </div>
    </div>
  );
}
const Ln2 = () => <svg viewBox="0 0 14 14" width="14" height="14"><path d="M2 1V13M7 1V13M12 1V13" stroke="currentColor" strokeWidth="1.6" strokeDasharray="2 1" /></svg>;

const TB = ({ c = '', children }: { c?: string; children: React.ReactNode }) => <div className={`h-[22px] flex items-center justify-center shrink-0 ${c}`}>{children}</div>;
const Group = ({ c = '', children }: { c?: string; children: React.ReactNode }) => <div className={`mt-[10px] h-[22px] flex bg-[#3a4350] rounded-[2px] divide-x divide-[#262a31] shrink-0 text-[#e6e9ec] ${c}`}>{children}</div>;
const Frame = ({ d }: { d: string }) => <svg viewBox="0 0 18 16" width="18" height="16"><rect x=".7" y=".7" width="16.6" height="14.6" fill="none" stroke="#fff" strokeWidth="1.2" /><path d={d} fill="#e9eefb" /></svg>;

const BeamMini = () => <svg viewBox="0 0 14 14" width="12" height="12" fill="currentColor"><ellipse cx="3" cy="11" rx="2.4" ry="1.9" /><ellipse cx="10.5" cy="11" rx="2.4" ry="1.9" /><rect x="4.6" y="2" width="1.1" height="9" /><rect x="12" y="2" width="1.1" height="9" /><rect x="4.6" y="2" width="8.5" height="2" /></svg>;

function Header() {
  const menus = ['文档', '编辑', '音轨', '小节', '音符', '音效', '区域注解', '工具', '音乐', '预览', '视窗', '帮助'];
  return (
    <div className="h-[69px] shrink-0 bg-[#292d35] border-b border-[#111317]">
      <div className="h-[23px] flex items-center pl-2 gap-[16.8px] text-[14.7px] text-[#e4e6e9]">
        {menus.map((m) => <span key={m}>{m}</span>)}
      </div>
      <div className="h-[45px] flex items-start">
        <Group c="ml-[6px] bg-[#5283d3] divide-[#3b66ae]">
          <TB c="w-[35px]"><Frame d="M2 2H5V14H2Z" /></TB>
          <TB c="w-[35px]"><Frame d="M2 11H16V14H2Z" /></TB>
          <TB c="w-[34px]"><Frame d="M13 2H16V14H13Z" /></TB>
        </Group>
        <div className="ml-[7px] mt-[10px] relative shrink-0">
          <div className="h-[22px] flex bg-[#3a4350] rounded-[2px] divide-x divide-[#262a31] text-[#dfe2e6]">
            <div className="w-[81px] flex items-center pl-[2px]"><Search size={18} strokeWidth={2.2} className="shrink-0" /><span className="ml-[1px] font-['Noto_Sans',sans-serif] text-[15px] tracking-[-.4px]">100%</span><ChevronsUpDown size={13} className="ml-[2px] shrink-0" /></div>
            <div className="w-[36px] flex items-center pl-1"><svg viewBox="0 0 14 14" width="14" height="14"><path d="M1 1H6V6H1ZM8 1H13V6H8ZM1 8H6V13H1Z" fill="none" stroke="currentColor" strokeWidth="1" /></svg><ChevronsUpDown size={13} className="ml-[3px]" /></div>
          </div>
          <div className="mt-[5px] w-[81px] h-[2px] bg-[#3a4350]"><div className="w-[40px] h-full bg-[#8a8f96]" /></div>
        </div>
        <Group c="ml-[6px]">
          <TB c="w-[35px]"><Undo2 size={16} strokeWidth={2.4} /></TB>
          <TB c="w-[34px]"><Redo2 size={16} strokeWidth={2.4} /></TB>
        </Group>
        <Group c="ml-[6px]"><TB c="w-[34px]"><Printer size={16} strokeWidth={2.6} /></TB></Group>
        <div className="ml-[280px] w-[135px] mt-[5px] h-8 flex items-center text-[#c8ccd2] shrink-0">
          <svg viewBox="0 0 126 32" width="126" height="32" fill="currentColor">
            <path d="M0 9H3V23H0ZM4 16L15 9V23Z" />
            <path d="M23 16L33 9V23ZM33 16L43 9V23Z" />
            <circle cx="63" cy="16" r="15.5" fill="none" stroke="currentColor" strokeWidth="1" />
            <path d="M57 7L72 16L57 25Z" />
            <path d="M84 9L94 16L84 23ZM94 9L104 16L94 23Z" />
            <path d="M110 9L121 16L110 23ZM122 9H125V23H122Z" />
          </svg>
        </div>
        <div className="w-[391px] h-[43px] bg-[#17191d] rounded-[3px] shrink-0 flex flex-col text-[#c8ccd2] font-['Noto_Sans','Noto_Sans_CJK_SC',sans-serif] overflow-hidden">
          <div className="h-[22px] flex items-center border-b border-[#272a30] text-white">
            <div className="w-1 h-full bg-[#d35c6a]" />
            <GuitarHead c="ml-[3px] w-[14px] h-[17px]" />
            <span className="ml-[6px] text-[16.6px] font-semibold leading-none">1. Steel Guitar</span>
            <div className="ml-auto flex items-center">
              <svg viewBox="0 0 12 18" width="12" height="17" fill="currentColor"><path d="M0 0H12V2H11Q11 7 7 9Q11 11 11 16H12V18H0V16H1Q1 11 5 9Q1 7 1 2H0ZM3 2Q3 6 6 8Q9 6 9 2Z" /></svg>
              <svg viewBox="0 0 14 18" width="14" height="17" fill="currentColor" className="ml-2"><path d="M5 0H9L14 18H0ZM3 15H8L10 9L7 13Z" /></svg>
              <EllipsisVertical size={15} className="ml-[8px]" />
              <span className="ml-[2px] h-[22px] border-l border-[#272a30] pl-[7px] text-[#454a52] text-[14px] leading-[22px] whitespace-nowrap w-[41px]">F♯4</span>
            </div>
          </div>
          <div className="h-[21px] flex items-center text-[14px] leading-none font-light whitespace-nowrap">
            <span className="ml-[20px] w-[46px]">1/16</span>
            <span className="w-[7px] h-[7px] rounded-full bg-[#9bc46a] mr-[1px] ml-[1px] shrink-0" />
            <span className="w-[79px]">4.0:4.0</span>
            <span>00:00 / 00:24</span>
            <span className="ml-[48px] flex items-center text-white"><BeamMini /><span className="mx-[1px] text-[10px]">=</span><BeamMini /></span>
            <svg viewBox="0 0 10 14" width="9" height="13" fill="#fff" className="ml-[6px]"><ellipse cx="4" cy="11.5" rx="3.4" ry="2.3" /><rect x="6.4" y="0" width="1.1" height="11" /></svg>
            <span className="text-[10px] mx-[2px]">=</span>
            <span>160</span>
            <svg viewBox="0 0 8 14" width="7" height="14" fill="#fff" className="ml-[11px]"><path d="M2 0L6 4L3 7L6 10Q3 10 4 14Q0 11 3 9L1 6L3 4Z" /></svg>
          </div>
        </div>
        <Group c="ml-[6px] text-[#c8ccd2]">
          <TB c="w-[34px]"><svg viewBox="0 0 20 16" width="20" height="16"><path d="M8 2H15Q19 2 19 7V9Q19 14 14 14H6Q1 14 1 9V7Q1 4 4 3M8 2L5 0M8 2L5 5" fill="none" stroke="currentColor" strokeWidth="1.3" /></svg></TB>
          <TB c="w-[72px] pl-[6px] justify-start"><svg viewBox="0 0 10 16" width="10" height="15" fill="#fff"><ellipse cx="4" cy="13" rx="3.6" ry="2.5" /><rect x="6.6" y="1" width="1.2" height="12" /></svg><span className="ml-[10px] text-[14px] text-[#5a6270]">100%</span></TB>
          <TB c="w-[17px] text-[#4f5865]"><ChevronsUpDown size={12} /></TB>
        </Group>
        <Group c="ml-[6px]">
          <TB c="w-[50px] justify-start pl-[3px]"><svg viewBox="0 0 16 18" width="15" height="17"><path d="M11 1L7 9M15 2L10 10Q8 12 6 11M7 9L3 17" fill="none" stroke="#eee" strokeWidth="1.5" /></svg><span className="ml-[10px] text-[14px] text-[#5a6270]">0</span></TB>
          <TB c="w-[19px] text-[#6d7583] text-[13px] font-bold flex-col leading-[10px]"><span>+</span><span>−</span></TB>
        </Group>
        <Group c="ml-[376px] text-[#e6e9ec]">
          <TB c="w-[35px] text-white"><GuitarHead /></TB>
          <TB c="w-[35px]"><svg viewBox="0 0 18 18" width="17" height="17"><rect x="1" y="1" width="16" height="16" fill="#fff" stroke="#111" /><path d="M6.3 1V17M11.7 1V17" stroke="#111" /><path d="M4.5 1H7.5V11H4.5ZM10 1H13V11H10Z" fill="#111" /></svg></TB>
          <TB c="w-[34px] text-[#6a727e]"><svg viewBox="0 0 18 18" width="16" height="16" fill="currentColor"><path d="M2 7H16V15Q9 19 2 15ZM8 2L15 5L14 6L7 3Z" /></svg></TB>
        </Group>
        <Group c="ml-[6px]">
          <TB c="w-[34px]"><svg viewBox="0 0 20 18" width="20" height="18"><path d="M9 3V10Q9 11 10 11T11 10V3M10 11V17M5 3Q3 7 5 11M15 3Q17 7 15 11M2 2Q0 7 2 12M18 2Q20 7 18 12" fill="none" stroke="#dfe2e6" strokeWidth="1.2" /></svg></TB>
          <TB c="w-[34px]"><svg viewBox="0 0 18 18" width="17" height="17"><path d="M16 1L8 9L10 11L17 3M9 10Q5 10 7 13T4 16T2 14" fill="none" stroke="#dfe2e6" strokeWidth="1.3" /></svg></TB>
        </Group>
      </div>
    </div>
  );
}

export default function App() {
  return (
    <div className="relative w-[1920px] h-[1004px] overflow-hidden bg-[#292d35] flex flex-col font-['Noto_Sans_CJK_SC','Noto_Sans',sans-serif] font-light">
      <Header />
      <div className="h-[23px] shrink-0 flex items-stretch bg-gradient-to-b from-[#5f7087] to-[#56667c] border-b border-[#22262c] text-white text-[15.5px]">
        <div className="w-[1897px] flex items-center justify-center">正义之道</div>
        <div className="w-[23px] border-l border-[#2a2e36] flex items-center justify-center"><Plus size={13} strokeWidth={3.5} /></div>
      </div>
      <div className="h-[844px] shrink-0 flex overflow-hidden">
        <LeftPanel />
        <div className="flex-1 bg-[#4e5256] pl-[230px] overflow-hidden"><Score /></div>
        <RightPanel />
      </div>
      <Bottom />
      <svg viewBox="0 0 12 20" width="12" height="20" className="absolute left-[298px] top-[122px]"><path d="M1 1V16L4.5 12.5L7 18.5L9.5 17.5L7 11.5H11.5Z" fill="#fff" stroke="#222" strokeWidth="1" /></svg>
    </div>
  );
}
